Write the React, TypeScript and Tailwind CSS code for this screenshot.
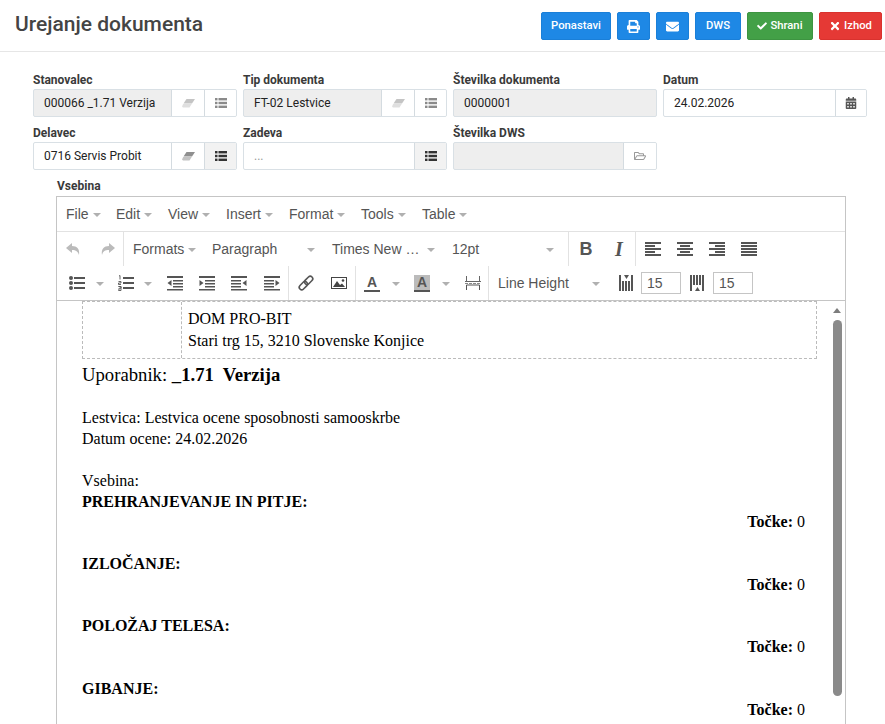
import { ReactNode } from "react";
import { FaCalendarAlt, FaCheck, FaEnvelope, FaPrint, FaRegFolderOpen, FaTimes } from "react-icons/fa";

const BLUE = "bg-[#1e88e5] border-[#1a7fd8]";

const TopButton = ({ className, children }: { className: string; children: ReactNode }) => (
  <button className={className + " h-[28px] rounded-[2px] border text-white text-[11.250px] font-medium flex items-center justify-center gap-[3px]"}>
    {children}
  </button>
);

const Addon = ({ active, width, children }: { active?: boolean; width?: string; children: ReactNode }) => (
  <div className={(active ? "bg-[#f2f2f2] " : "bg-white ") + (width ?? "w-[32px]") + " shrink-0 border-l border-[#d4dbe0] flex items-center justify-center"}>
    {children}
  </div>
);

// font awesome 4 eraser: solid top half, outlined bottom half
const Eraser = ({ color }: { color: string }) => (
  <svg width="13" height="9" viewBox="0 0 13 9" fill={color}>
    <path d="M4.500 0H13L10 4.500H1.500z" />
    <path fillOpacity="0.55" d="M1.200 5H9.700L7.500 8.500H1L0 7.500z" />
  </svg>
);

const ListIcon = ({ color }: { color: string }) => (
  <svg width="12" height="10" viewBox="0 0 12 10" fill={color}>
    <rect x="0" y="0" width="2.500" height="2.400" /><rect x="3.500" y="0" width="8.500" height="2.400" />
    <rect x="0" y="3.800" width="2.500" height="2.400" /><rect x="3.500" y="3.800" width="8.500" height="2.400" />
    <rect x="0" y="7.600" width="2.500" height="2.400" /><rect x="3.500" y="7.600" width="8.500" height="2.400" />
  </svg>
);

const Field = ({ label, value, grey, muted, children }: { label: string; value: string; grey?: boolean; muted?: boolean; children?: ReactNode }) => (
  <div className="w-[204px]">
    <div className="h-[17px] text-[12px] leading-[17px] font-bold text-[#3a3a3a]">{label}</div>
    <div className={(grey ? "bg-[#eeeeee] " : "bg-white ") + "h-[28px] flex border border-[#d9e0e5] rounded-[2px] overflow-hidden"}>
      <div className={(muted ? "text-[#999999] " : "text-[#222222] ") + "flex-1 min-w-0 pl-[10px] text-[12px] leading-[26px] whitespace-nowrap"}>{value}</div>
      {children}
    </div>
  </div>
);

const Caret = () => <span className="inline-block ml-[4px] mt-[2px] w-0 h-0 border-x-[4px] border-x-transparent border-t-[4px] border-t-[#b0b0b0]" />;

const MenuItem = ({ label, className }: { label: string; className: string }) => (
  <span className={className + " flex items-center text-[14px] text-[#555555]"}>
    {label}
    <Caret />
  </span>
);

const ListBox = ({ label, width }: { label: string; width: string }) => (
  <div className={width + " shrink-0 flex items-center justify-between text-[14px] text-[#555555] whitespace-nowrap"}>
    <span>{label}</span>
    <Caret />
  </div>
);

const Lines = ({ rows }: { rows: [number, number][] }) => (
  <svg width="16" height="16" viewBox="0 0 16 16" fill="#555555">
    {rows.map(([x, w], i) => (
      <rect key={i} x={x} y={1 + i * 3} width={w} height="2" />
    ))}
  </svg>
);

const ToolIcon = ({ children, className }: { children: ReactNode; className?: string }) => (
  <div className={(className ?? "w-[32px]") + " shrink-0 flex items-center justify-center"}>{children}</div>
);

const Indent = ({ side, out }: { side: "l" | "r"; out: boolean }) => {
  const left = side === "l";
  const tip = out ? (left ? "4.500,5 0.500,8 4.500,11" : "11.500,5 15.500,8 11.500,11") : left ? "0.500,5 4.500,8 0.500,11" : "15.500,5 11.500,8 15.500,11";
  return (
    <svg width="16" height="16" viewBox="0 0 16 16" fill="#555555">
      <rect x="0" y="1" width="16" height="2" />
      <rect x={left ? 6 : 0} y="5" width="10" height="1.500" />
      <rect x={left ? 6 : 0} y="8" width="10" height="1.500" />
      <rect x={left ? 6 : 0} y="11" width="10" height="1.500" />
      <rect x="0" y="14" width="16" height="1.500" />
      <polygon points={tip} />
    </svg>
  );
};

const Score = () => (
  <p className="text-right pr-[12px]">
    <b>Točke:</b> 0
  </p>
);

export default function App() {
  return (
    <div className="w-[885px] h-[724px] overflow-hidden bg-white font-['Roboto',sans-serif]">
      <header className="h-[52px] border-b border-[#e6e6e6] flex items-center pl-[15px] pr-[3px]">
        <h1 className="text-[21px] font-medium text-[#444444] -mt-[2px]">Urejanje dokumenta</h1>
        <div className="ml-auto flex gap-[6px] mt-[1px]">
          <TopButton className={BLUE + " w-[70px]"}>Ponastavi</TopButton>
          <TopButton className={BLUE + " w-[33px]"}><FaPrint size={13} /></TopButton>
          <TopButton className={BLUE + " w-[33px]"}><FaEnvelope size={13} /></TopButton>
          <TopButton className={BLUE + " w-[46px]"}>DWS</TopButton>
          <TopButton className="w-[66px] bg-[#43a047] border-[#3d9441]"><FaCheck size={10} />Shrani</TopButton>
          <TopButton className="w-[63px] bg-[#e53935] border-[#d9322e]"><FaTimes size={12} />Izhod</TopButton>
        </div>
      </header>

      <div className="pl-[33px] pt-[20px]">
        <div className="flex gap-[6px]">
          <Field label="Stanovalec" value="000066 _1.71 Verzija" grey>
            <Addon width="w-[33px]"><Eraser color="#c4c4c4" /></Addon>
            <Addon><ListIcon color="#8a8a8a" /></Addon>
          </Field>
          <Field label="Tip dokumenta" value="FT-02 Lestvice" grey>
            <Addon width="w-[33px]"><Eraser color="#c4c4c4" /></Addon>
            <Addon><ListIcon color="#8a8a8a" /></Addon>
          </Field>
          <Field label="Številka dokumenta" value="0000001" grey />
          <Field label="Datum" value="24.02.2026">
            <Addon width="w-[31px]"><FaCalendarAlt size={12} className="text-[#555555]" /></Addon>
          </Field>
        </div>
        <div className="flex gap-[6px] mt-[8px]">
          <Field label="Delavec" value="0716 Servis Probit">
            <Addon width="w-[33px]"><Eraser color="#8f8f8f" /></Addon>
            <Addon active><ListIcon color="#333333" /></Addon>
          </Field>
          <Field label="Zadeva" value="..." muted>
            <Addon active><ListIcon color="#333333" /></Addon>
          </Field>
          <Field label="Številka DWS" value="" grey>
            <Addon width="w-[33px]"><FaRegFolderOpen size={12} className="text-[#999999]" /></Addon>
          </Field>
        </div>
      </div>

      <div className="ml-[57px] mt-[8px] h-[18px] text-[12px] leading-[17px] font-bold text-[#3a3a3a]">Vsebina</div>

      <div className="ml-[56px] w-[790px] h-[600px] border border-[#c5c5c5] font-['Liberation_Sans',sans-serif]">
        <div className="h-[35px] flex items-center pl-[9px] border-b border-[#e2e2e2]">
          <MenuItem label="File" className="w-[50px]" />
          <MenuItem label="Edit" className="w-[52px]" />
          <MenuItem label="View" className="w-[58px]" />
          <MenuItem label="Insert" className="w-[63px]" />
          <MenuItem label="Format" className="w-[72px]" />
          <MenuItem label="Tools" className="w-[61px]" />
          <MenuItem label="Table" className="w-[60px]" />
        </div>

        <div className="h-[34px] flex items-stretch">
          <ToolIcon className="w-[33px]">
            <svg width="16" height="14" viewBox="0 0 16 14" fill="#bbbbbb"><path d="M6 1 0 6l6 5V8c4 0 6 1.500 7 5 1-6-2-9-7-9z" /></svg>
          </ToolIcon>
          <ToolIcon className="w-[33px]">
            <svg width="16" height="14" viewBox="0 0 16 14" fill="#bbbbbb"><path d="M10 1l6 5-6 5V8C6 8 4 9 3 13 2 7 5 4 10 4z" /></svg>
          </ToolIcon>
          <div className="w-[1px] bg-[#e2e2e2]" />
          <div className="pl-[9px] w-[88px] shrink-0 flex items-center text-[14px] text-[#555555]">Formats<Caret /></div>
          <ListBox label="Paragraph" width="w-[103px]" />
          <div className="w-[17px]" />
          <ListBox label="Times New …" width="w-[103px]" />
          <div className="w-[17px]" />
          <ListBox label="12pt" width="w-[102px]" />
          <div className="w-[14px]" />
          <div className="w-[1px] bg-[#e2e2e2]" />
          <ToolIcon className="w-[34px]"><span className="font-bold text-[18px] text-[#555555]">B</span></ToolIcon>
          <ToolIcon className="w-[32px]"><span className="italic font-['Liberation_Serif',serif] font-bold text-[20px] text-[#555555]">I</span></ToolIcon>
          <div className="w-[1px] bg-[#e2e2e2]" />
          <ToolIcon className="w-[33px]"><Lines rows={[[0, 16], [0, 10], [0, 16], [0, 10], [0, 16]]} /></ToolIcon>
          <ToolIcon><Lines rows={[[0, 16], [3, 10], [0, 16], [3, 10], [0, 16]]} /></ToolIcon>
          <ToolIcon><Lines rows={[[0, 16], [6, 10], [0, 16], [6, 10], [0, 16]]} /></ToolIcon>
          <ToolIcon><Lines rows={[[0, 16], [0, 16], [0, 16], [0, 16], [0, 16]]} /></ToolIcon>
        </div>

        <div className="h-[35px] flex items-stretch border-b border-[#c5c5c5] pl-[5px]">
          <ToolIcon className="w-[30px]">
            <svg width="16" height="16" viewBox="0 0 16 16" fill="#555555">
              <circle cx="2" cy="3" r="2" /><circle cx="2" cy="8" r="2" /><circle cx="2" cy="13" r="2" />
              <rect x="5" y="2" width="11" height="2" /><rect x="5" y="7" width="11" height="2" /><rect x="5" y="12" width="11" height="2" />
            </svg>
          </ToolIcon>
          <div className="w-[20px] flex items-center"><Caret /></div>
          <ToolIcon className="w-[28px]">
            <svg width="16" height="16" viewBox="0 0 16 16">
              <path fill="none" stroke="#555555" strokeWidth="0.900" d="M1 1l1-.5v4M.500 6.500h2.500v1.500h-2.500v1.500h2.500M.500 11.500h2.500v1.700h-2v-0 2h-.500" />
              <path fill="none" stroke="#555555" strokeWidth="0.900" d="M.500 11.500h2.500v4h-2.500" />
              <rect x="5" y="2" width="11" height="2" fill="#555555" /><rect x="5" y="7" width="11" height="2" fill="#555555" /><rect x="5" y="12" width="11" height="2" fill="#555555" />
            </svg>
          </ToolIcon>
          <div className="w-[19px] flex items-center"><Caret /></div>
          <ToolIcon><Indent side="l" out /></ToolIcon>
          <ToolIcon><Indent side="l" out={false} /></ToolIcon>
          <ToolIcon><Indent side="r" out={false} /></ToolIcon>
          <ToolIcon className="w-[33px]"><Indent side="r" out /></ToolIcon>
          <div className="w-[1px] bg-[#e2e2e2]" />
          <ToolIcon className="w-[33px]">
            <svg width="18" height="18" viewBox="0 0 18 18" fill="none" stroke="#555555" strokeWidth="1.600">
              <g transform="rotate(-45 9 9)">
                <rect x="0.500" y="6.500" width="9.500" height="5" rx="2.500" />
                <rect x="8" y="6.500" width="9.500" height="5" rx="2.500" />
              </g>
            </svg>
          </ToolIcon>
          <ToolIcon className="w-[33px]">
            <svg width="16" height="14" viewBox="0 0 16 14">
              <path fill="#444444" fillRule="evenodd" d="M0 1h16v12H0zM1 2v10h14V2z" />
              <path fill="#444444" d="M2 11l4-6 3 4 2-1.500 3 3.500z" /><circle cx="12" cy="4.500" r="1.300" fill="#444444" />
            </svg>
          </ToolIcon>
          <div className="w-[1px] bg-[#e2e2e2]" />
          <ToolIcon className="w-[32px]">
            <div className="flex flex-col items-center text-[14px] font-bold leading-[14px] text-[#555555]">
              A<div className="w-[16px] h-[2px] mt-[1px] bg-[#555555]" />
            </div>
          </ToolIcon>
          <div className="w-[18px] flex items-center"><Caret /></div>
          <ToolIcon className="w-[32px]">
            <div className="w-[16px] flex flex-col items-center text-[14px] font-bold leading-[14px] bg-[#bbbbbb] text-[#555555]">
              A<div className="w-[16px] h-[2px] mt-[1px] bg-[#555555]" />
            </div>
          </ToolIcon>
          <div className="w-[19px] flex items-center"><Caret /></div>
          <ToolIcon className="w-[31px]">
            <svg width="16" height="16" viewBox="0 0 16 16" fill="none" stroke="#555555">
              <path d="M1.500 1v5.500M14.500 1v5.500M0 6.500h16" strokeDasharray="none" stroke="#666666" />
              <path d="M1.500 15v-5h13v5" />
              <path d="M0 8.500h16" stroke="#888888" strokeDasharray="3 1" />
            </svg>
          </ToolIcon>
          <div className="w-[1px] bg-[#e2e2e2]" />
          <ListBox label="Line Height" width="w-[122px] pl-[9px] pr-[11px]" />
          <ToolIcon className="w-[30px]">
            <svg width="15" height="16" viewBox="0 0 15 16" fill="#555555">
              <rect x="0" y="0" width="2" height="16" /><rect x="3" y="6" width="2" height="10" /><rect x="6" y="6" width="2" height="10" /><rect x="9" y="6" width="2" height="10" /><rect x="12" y="0" width="2" height="16" />
              <polygon points="5,0 10,0 7.500,4" />
            </svg>
          </ToolIcon>
          <div className="w-[40px] h-[22px] mt-[6px] border border-[#c5c5c5] text-[14px] leading-[20px] text-[#555555] pl-[5px]">15</div>
          <ToolIcon className="w-[32px]">
            <svg width="15" height="16" viewBox="0 0 15 16" fill="#555555">
              <rect x="0" y="0" width="2" height="16" /><rect x="3" y="0" width="2" height="10" /><rect x="6" y="0" width="2" height="10" /><rect x="9" y="0" width="2" height="10" /><rect x="12" y="0" width="2" height="16" />
              <polygon points="5,16 10,16 7.500,12" />
            </svg>
          </ToolIcon>
          <div className="w-[40px] h-[22px] mt-[6px] border border-[#c5c5c5] text-[14px] leading-[20px] text-[#555555] pl-[5px]">15</div>
        </div>

        <div className="relative h-[500px] overflow-hidden pl-[25px] pr-[28px] font-['Liberation_Serif',serif] text-[16px] leading-[21px] text-black">
          <div className="h-[58px] flex border border-dashed border-[#bbbbbb]">
            <div className="w-[99px] border-r border-dashed border-[#bbbbbb]" />
            <div className="pl-[6px] pt-[6px]">
              <p className="h-[22px]">DOM PRO-BIT</p>
              <p>Stari trg 15, 3210 Slovenske Konjice</p>
            </div>
          </div>
          <p className="text-[18.700px] leading-[24px] mt-[4px] whitespace-pre">Uporabnik: <b>_1.71  Verzija</b></p>
          <p className="mt-[20px]">Lestvica: Lestvica ocene sposobnosti samooskrbe</p>
          <p>Datum ocene: 24.02.2026</p>
          <p className="mt-[21px]">Vsebina:</p>
          <p className="h-[20px]"><b>PREHRANJEVANJE IN PITJE:</b></p>
          <Score />
          <p className="mt-[21px]"><b>IZLOČANJE:</b></p>
          <Score />
          <p className="mt-[20px]"><b>POLOŽAJ TELESA:</b></p>
          <Score />
          <p className="mt-[21px]"><b>GIBANJE:</b></p>
          <Score />

          <div className="absolute right-[3px] top-0 bottom-0 w-[10px] flex flex-col items-center">
            <div className="mt-[7px] w-0 h-0 border-x-[4px] border-x-transparent border-b-[5px] border-b-[#7d7d7d]" />
            <div className="mt-[7px] w-[9px] h-[376px] rounded-full bg-[#8a8a8a]" />
          </div>
        </div>
      </div>
    </div>
  );
}
